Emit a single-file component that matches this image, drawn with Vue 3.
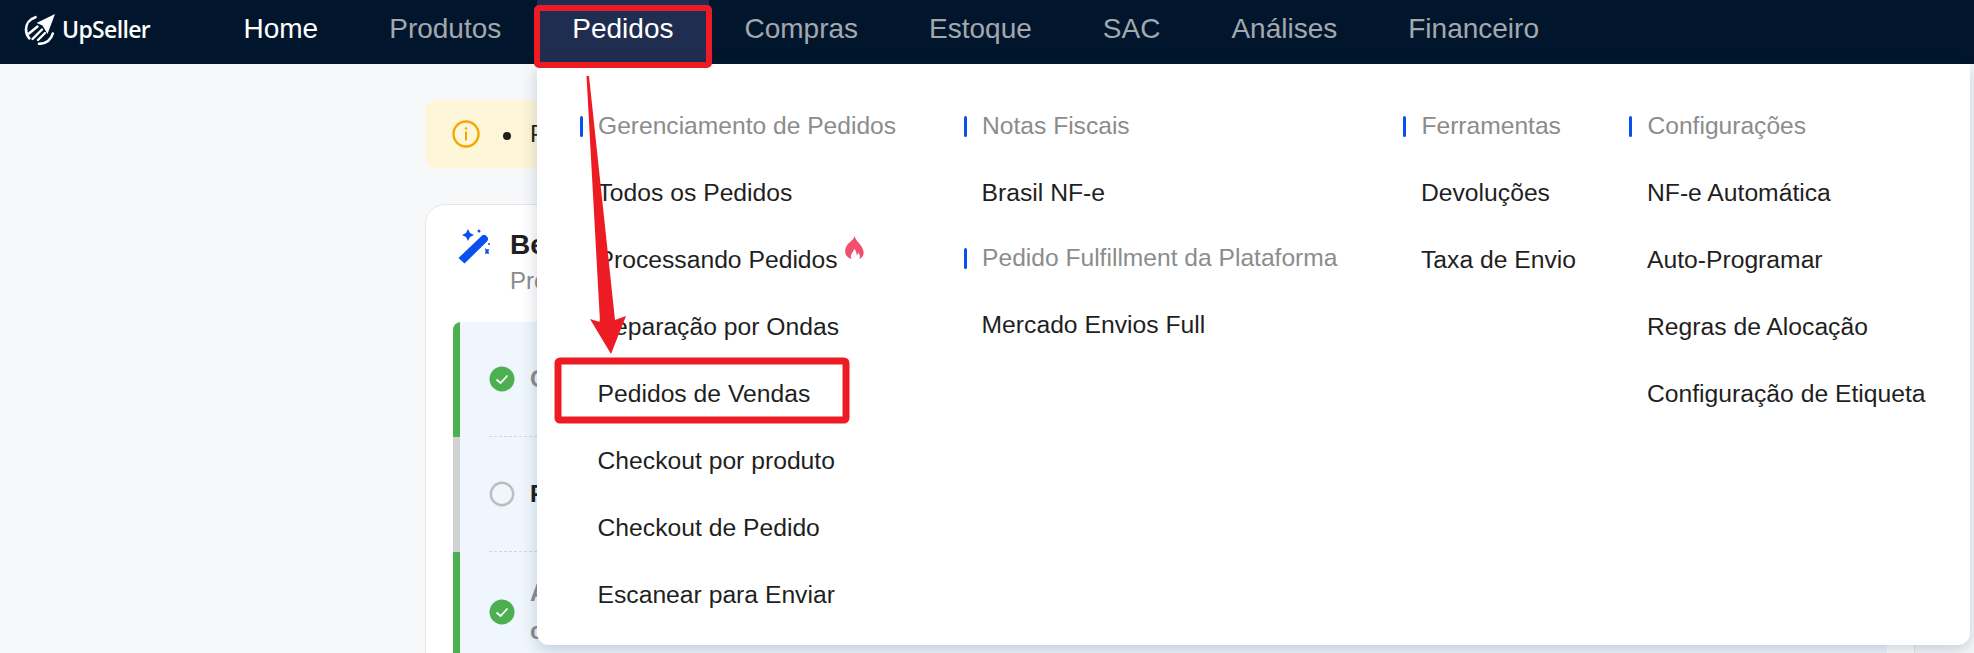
<script setup>
const navItems = ['Home', 'Produtos', 'Pedidos', 'Compras', 'Estoque', 'SAC', 'Análises', 'Financeiro']

const columns = [
  { groups: [{ title: 'Gerenciamento de Pedidos', items: ['Todos os Pedidos', 'Processando Pedidos', 'Separação por Ondas', 'Pedidos de Vendas', 'Checkout por produto', 'Checkout de Pedido', 'Escanear para Enviar'] }] },
  { groups: [
    { title: 'Notas Fiscais', items: ['Brasil NF-e'] },
    { title: 'Pedido Fulfillment da Plataforma', items: ['Mercado Envios Full'] },
  ] },
  { groups: [{ title: 'Ferramentas', items: ['Devoluções', 'Taxa de Envio'] }] },
  { groups: [{ title: 'Configurações', items: ['NF-e Automática', 'Auto-Programar', 'Regras de Alocação', 'Configuração de Etiqueta'] }] },
]

const steps = [
  { done: true, title: 'Conectar Loja' },
  { done: false, title: 'Publicar Produtos' },
  { done: true, title: 'Adicionar Estoque', sub: 'configurar' },
]
</script>

<template>
  <div class="page">
    <header class="nav">
      <div class="logo">
        <svg width="32" height="32" viewBox="0 0 32 32" fill="none" stroke="#fff" stroke-linecap="round">
          <path d="M11.5 4.2C6 5.8 2 10.5 2 16.5c0 3.6 1.3 6.6 3.4 8.9" stroke-width="2.6" />
          <path d="M28.8 20.5c-1.8 6-6.500 10.200-13.800 10.300" stroke-width="2.600" />
          <path d="M31 1 L12.500 10 L18.500 12.500 L23.500 21 Z" fill="#fff" stroke="none" />
          <path d="M5 20.500 L13.500 13.500 M8.500 26 L18 16.500 M14 27 L21 20" stroke-width="2.400" />
        </svg>
        <span class="logo-text">UpSeller</span>
      </div>
      <nav class="nav-items">
        <a v-for="item in navItems" :key="item" class="nav-item" :class="{ home: item === 'Home', active: item === 'Pedidos' }">{{ item }}</a>
      </nav>
    </header>

    <main class="content">
      <div class="alert">
        <svg width="28" height="28" viewBox="0 0 28 28" fill="none">
          <circle cx="14" cy="14" r="12.500" stroke="#f5a800" stroke-width="2.400" />
          <circle cx="14" cy="8.500" r="1.300" fill="#f5a800" />
          <rect x="13" y="11.500" width="2" height="9" fill="#f5a800" />
        </svg>
        <span class="dot"></span>
        <span>Por favor</span>
      </div>

      <section class="card">
        <div class="card-head">
          <svg width="34" height="36" viewBox="0 0 34 36">
            <path d="M0.500 29 L23 7.500 A3.800 3.800 0 0 1 29 12.500 L6.500 34.500 Z" fill="#0a50f0" />
            <path d="M10 0 L12 4 L16 6 L12 8 L10 12 L8 8 L4 6 L8 4 Z" fill="#0a50f0" />
            <circle cx="21" cy="2" r="1.500" fill="#0a50f0" />
            <circle cx="31" cy="15" r="1" fill="#0a50f0" />
            <path d="M27 19 L29 20.500 L31 20 L30.500 22.500 L31 25 L29 24.500 L27 25 L27.500 22.500 Z" fill="#0a50f0" />
          </svg>
          <div>
            <div class="card-title">Bem-vindo</div>
            <div class="card-sub">Processo</div>
          </div>
        </div>

        <div class="steps">
          <div v-for="(step, i) in steps" :key="i" class="step" :class="{ pending: !step.done }">
            <div class="step-inner">
              <svg width="26" height="26" viewBox="0 0 26 26" class="step-icon">
                <template v-if="step.done">
                  <circle cx="13" cy="13" r="12.500" fill="#4caf50" />
                  <path d="M7.500 13.500 L11.500 17 L18.500 9.500" fill="none" stroke="#fff" stroke-width="1.800" />
                </template>
                <circle v-else cx="13" cy="13" r="11.200" fill="none" stroke="#bdbdbd" stroke-width="2.400" />
              </svg>
              <div class="step-text" :class="{ dim: step.done }">
                <div :class="{ strong: !step.done }">{{ step.title }}</div>
                <div v-if="step.sub" class="step-sub">{{ step.sub }}</div>
              </div>
            </div>
          </div>
        </div>
      </section>
    </main>

    <div class="dropdown">
      <div v-for="(col, c) in columns" :key="c" class="col">
        <div v-for="group in col.groups" :key="group.title" class="group">
          <div class="group-title">{{ group.title }}</div>
          <a v-for="item in group.items" :key="item" class="menu-item">
            <span class="menu-label">
              {{ item }}
              <svg v-if="item === 'Processando Pedidos'" class="flame" width="19" height="23" viewBox="0 0 19 23">
                <path fill-rule="evenodd" d="M9.500 0c1 4 3.500 5.500 6 9 2.300 3.300 3.800 6.500 2.800 9.800-.6 2-2 3.500-4 4.200.9-2.200.5-4.300-.8-6.200-.4 1.300-1 2-1.900 2.600.2-2.700-.8-5-2.600-6.600-.2 2.200-1.300 3.400-2.300 5-1 1.600-1 3.500-.2 5.200-3-.6-5.500-3-6.200-6-.7-3.300.6-6 2.300-8.500C4.600 6 8.500 4 9.500 0Z" fill="#f0506e" />
              </svg>
            </span>
          </a>
        </div>
      </div>
    </div>

    <svg class="marks" width="1974" height="653" viewBox="0 0 1974 653">
      <rect x="537" y="8" width="172" height="57" rx="2" fill="none" stroke="#ed1c24" stroke-width="6" />
      <rect x="558" y="361" width="288" height="59" rx="2" fill="none" stroke="#ed1c24" stroke-width="7" />
      <path d="M586.500 76 L589 76 L615 320 L626 316 L611 354 L590 319 L600 322 Z" fill="#ed1c24" />
    </svg>
  </div>
</template>

<style>
body {
  background: #f7f8fa;
}
</style>

<style scoped>
.page {
  position: relative;
  height: 653px;
  overflow: hidden;
  background: #f7f8fa;
  font-family: "Liberation Sans", Arial, sans-serif;
  color: #1f1f1f;
}

.nav {
  display: flex;
  height: 64px;
  background: #01162c;
  padding-left: 24px;
}

.logo {
  display: flex;
  align-items: center;
  gap: 6px;
  width: 184px;
  padding-bottom: 6px;
}

.logo-text {
  font-family: "Open Sans", sans-serif;
  font-size: 23px;
  font-weight: 600;
  color: #fff;
  letter-spacing: -0.65px;
}

.nav-items {
  display: flex;
}

.nav-item {
  padding: 0 35.500px;
  font-size: 28px;
  line-height: 57px;
  color: #a3a8ae;
}

.nav-item.home {
  color: #fff;
}

.nav-item.active {
  color: #fff;
  background: #1f2d50;
}

.content {
  padding: 36px 59px 0 425px;
  display: flex;
  flex-direction: column;
  gap: 36px;
}

.alert {
  display: flex;
  align-items: center;
  height: 68px;
  padding-left: 27px;
  background: #fdf6d8;
  border-radius: 12px;
  font-size: 24px;
}

.dot {
  width: 8px;
  height: 8px;
  margin: 3px 19px 0 23px;
  border-radius: 50%;
  background: #1f1f1f;
}

.card {
  background: #fff;
  border: 1px solid #e6e6e6;
  border-radius: 20px;
  padding: 0 27px;
}

.card-head {
  display: flex;
  gap: 18px;
  box-sizing: border-box;
  height: 117px;
  padding: 22px 0 0 5px;
}

.card-head svg {
  margin-top: 2px;
}

.card-title {
  font-size: 28px;
  font-weight: 700;
  line-height: 36px;
}

.card-sub {
  margin-top: 3px;
  font-size: 24px;
  line-height: 30px;
  color: #8c8c8c;
}

.steps {
  background: #eff6fd;
  border-radius: 8px 0 0 0;
  overflow: hidden;
}

.step {
  border-left: 7px solid #4caf50;
  padding-left: 29px;
}

.step.pending {
  border-left-color: #d2d2d2;
}

.step-inner {
  display: flex;
  align-items: center;
  height: 114px;
  gap: 15px;
  border-bottom: 1px dashed #d5d5d5;
}

.step:last-child .step-inner {
  height: 120px;
}

.step-text {
  font-size: 24px;
  line-height: 38px;
}

.step-text.dim {
  color: #8c8c8c;
  font-weight: 700;
}

.strong {
  font-weight: 700;
  color: #1f1f1f;
}

.dropdown {
  position: absolute;
  top: 64px;
  left: 537px;
  width: 1433px;
  height: 581px;
  display: flex;
  gap: 68px;
  box-sizing: border-box;
  padding: 29px 0 0 43px;
  background: #fff;
  border-radius: 0 0 12px 12px;
  box-shadow: 0 5px 16px rgba(30, 50, 90, 0.22);
}

.col:nth-child(2) {
  margin-right: -2px;
}

.col:nth-child(3) {
  width: 158px;
}

.group + .group {
  margin-top: -1px;
}

.group-title {
  position: relative;
  height: 66px;
  padding-left: 18px;
  font-size: 24.600px;
  line-height: 66px;
  color: #8c8c8c;
  white-space: nowrap;
}

.group-title::before {
  content: "";
  position: absolute;
  left: 0;
  top: 23px;
  width: 3px;
  height: 21px;
  border-radius: 2px;
  background: #0a50f0;
}

.menu-item {
  display: block;
  height: 67px;
  padding-left: 17.500px;
  font-size: 24.700px;
  line-height: 67px;
  color: #1f1f1f;
  white-space: nowrap;
}

.menu-label {
  position: relative;
}

.flame {
  position: absolute;
  left: calc(100% + 7px);
  top: -10px;
}

.marks {
  position: absolute;
  top: 0;
  left: 0;
  pointer-events: none;
}
</style>
